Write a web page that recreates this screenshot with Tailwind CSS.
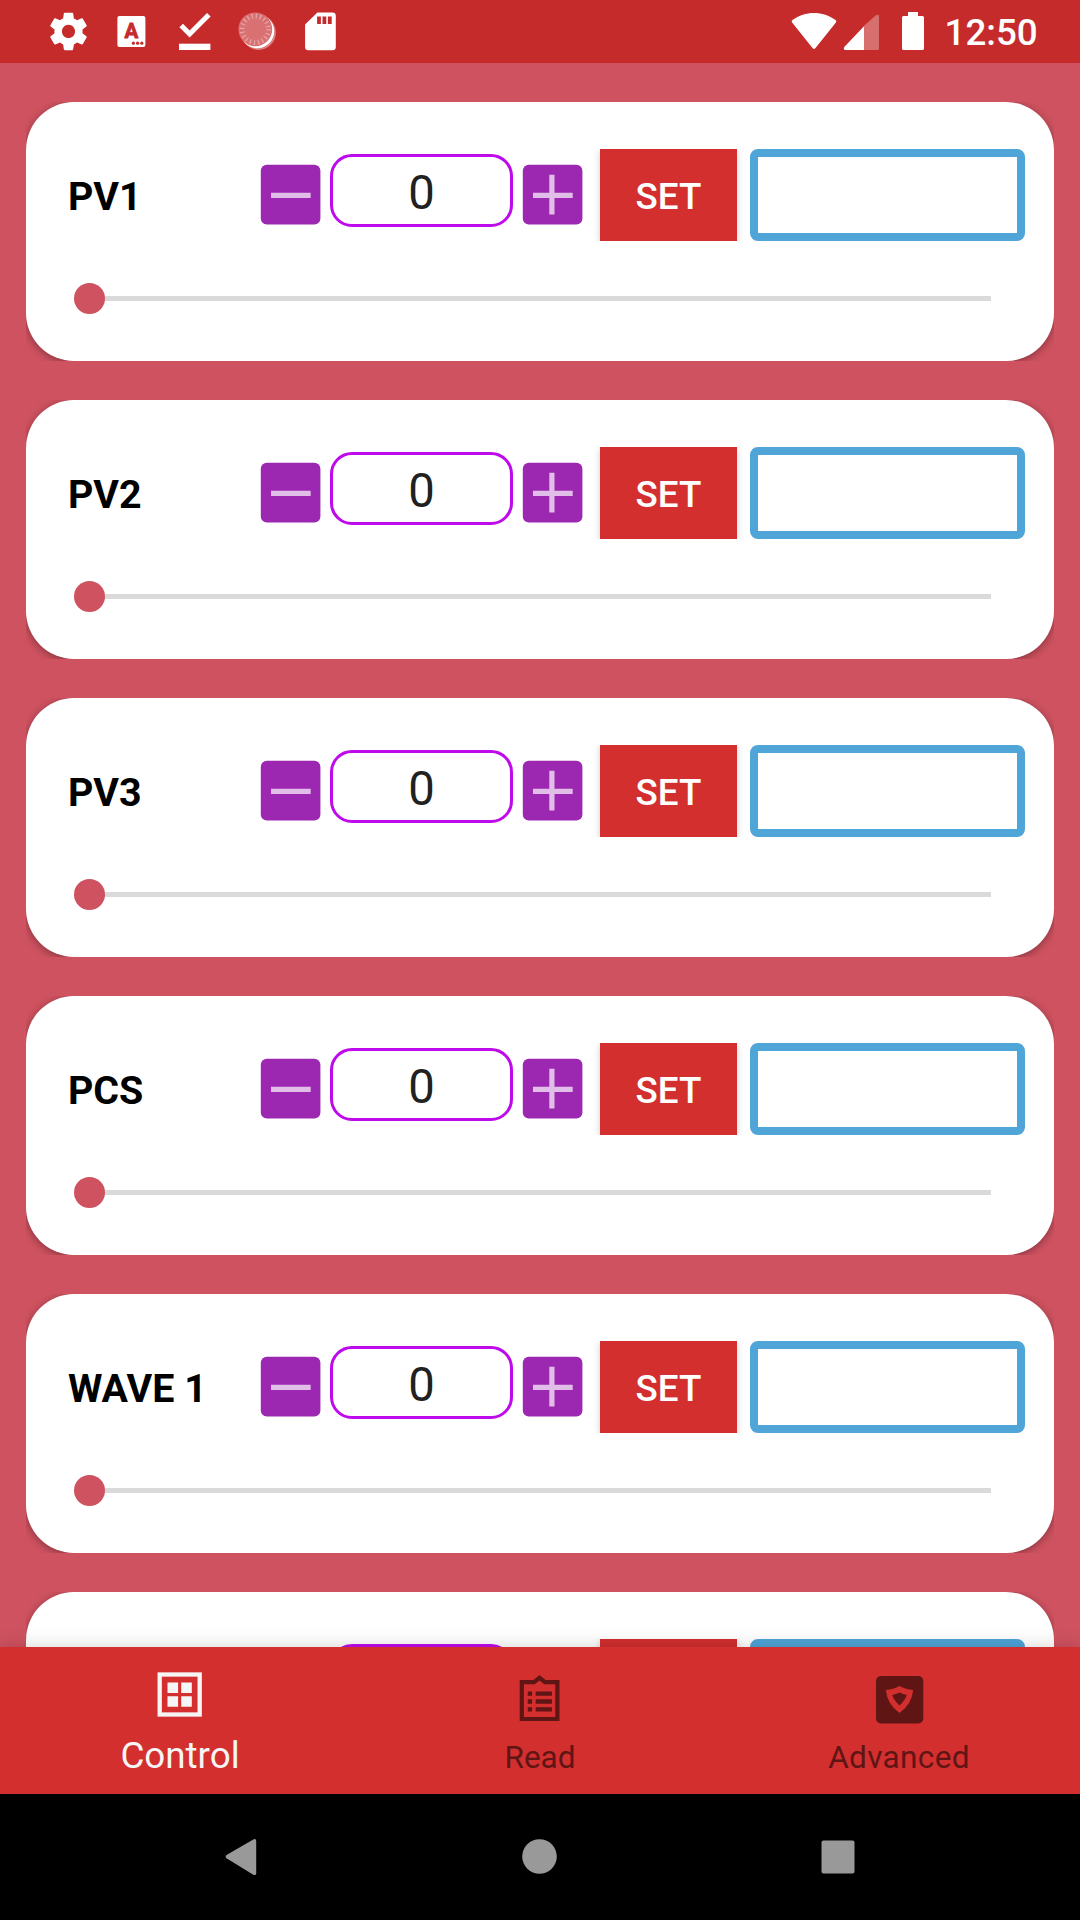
<!DOCTYPE html>
<html lang="en">
<head>
<meta charset="utf-8">
<title>Control</title>
<script src="https://cdn.jsdelivr.net/npm/@tailwindcss/browser@4"></script>
</head>
<body class="w-[1080px] h-[1920px] overflow-hidden flex flex-col bg-[#cf5260] font-['Roboto',sans-serif]">

<!-- Status bar -->
<header class="h-[63px] shrink-0 bg-[#c62b2b] flex items-start pl-[37px] text-white">
  <svg class="size-[63px]" viewBox="0 0 63 63" fill="currentColor"><path transform="translate(9 8.9) scale(1.875)" d="M19.43 12.98c.04-.32.07-.64.07-.98s-.03-.66-.07-.98l2.11-1.65c.19-.15.24-.42.12-.64l-2-3.46c-.12-.22-.39-.3-.61-.22l-2.49 1c-.52-.4-1.08-.73-1.69-.98l-.38-2.65C14.46 2.18 14.25 2 14 2h-4c-.25 0-.46.18-.49.42l-.38 2.65c-.61.25-1.17.59-1.69.98l-2.49-1c-.23-.09-.49 0-.61.22l-2 3.46c-.13.22-.07.49.12.64l2.11 1.65c-.04.32-.07.65-.07.98s.03.66.07.98l-2.11 1.65c-.19.15-.24.42-.12.64l2 3.46c.12.22.39.3.61.22l2.49-1c.52.4 1.08.73 1.69.98l.38 2.65c.03.24.24.42.49.42h4c.25 0 .46-.18.49-.42l.38-2.65c.61-.25 1.17-.59 1.69-.98l2.49 1c.23.09.49 0 .61-.22l2-3.46c.12-.22.07-.49-.12-.64l-2.11-1.65zM12 15.5c-1.93 0-3.5-1.57-3.5-3.5s1.57-3.5 3.5-3.5 3.5 1.57 3.5 3.5-1.57 3.5-3.5 3.5z"/></svg>
  <svg class="size-[63px]" viewBox="0 0 63 63" fill="currentColor"><rect x="17.4" y="16" width="28" height="31" rx="2"/><text x="31.3" y="38.3" text-anchor="middle" font-size="20.5" font-weight="700" fill="#c62b2b" stroke="#c62b2b" stroke-width=".8" stroke-linejoin="round">A</text><g fill="#c62b2b"><circle cx="33.4" cy="43.2" r="1.6"/><circle cx="37.6" cy="43.2" r="1.6"/><circle cx="41.8" cy="43.2" r="1.6"/></g></svg>
  <svg class="size-[63px]" viewBox="0 0 63 63" fill="currentColor"><path d="M18.2 25.6 26.6 34 45.8 14.7" fill="none" stroke="currentColor" stroke-width="5"/><rect x="16" y="43.7" width="31.4" height="6.3"/></svg>
  <svg class="size-[63px]" viewBox="0 0 63 63"><circle cx="32.6" cy="32.6" r="17.3" fill="#dc7f7f"/><circle cx="31.2" cy="31.3" r="17" fill="#fff"/><circle cx="29.3" cy="29.3" r="16.9" fill="#d97072"/><circle cx="29.3" cy="29.3" r="13.2" fill="none" stroke="#e6a3a3" stroke-width="5" stroke-dasharray="1.3 2.85"/></svg>
  <svg class="size-[63px]" viewBox="0 0 63 63" fill="currentColor"><path fill-rule="evenodd" d="M28.3 12.6H43.5a3.3 3.3 0 0 1 3.3 3.3V47a3.3 3.3 0 0 1-3.3 3.3H19.4a3.3 3.3 0 0 1-3.3-3.3V24.6zM28.1 16.4V24h3.8v-7.6zM33.5 16.4V24h3.8v-7.6zM38.9 16.4V24h3.8v-7.6z"/></svg>
  <span class="grow"></span>
  <svg class="w-[48px] h-[63px]" viewBox="0 0 48 63" fill="currentColor"><path d="M2.1 22.4Q1 21 2.5 20C15 10.6 33 10.6 45.500 20Q47 21 45.900 22.400L25.300 48.200Q24 49.700 22.700 48.200z"/></svg>
  <svg class="w-[48px] h-[63px]" viewBox="0 0 48 63" fill="currentColor"><path opacity=".32" d="M26 25.800 37.600 15.400Q41 13.500 41 16.500V48.500Q41 50 39.500 50H26z"/><path d="M26 26.300V50H6.800Q5 49.300 6.500 46.800z"/></svg>
  <svg class="w-[59px] h-[63px]" viewBox="0 0 59 63" fill="currentColor"><path d="M22 12h10v4h4.500Q38 16 38 17.500v31Q38 50 36.500 50h-19Q16 50 16 48.500v-31Q16 16 17.500 16H22z"/></svg>
  <span class="w-[135px] pt-[6px] -indent-[0.5px] text-[36.75px] leading-[54px] font-medium">12:50</span>
</header>

<!-- Channel list -->
<main id="channels" class="h-[1584px] shrink-0 overflow-hidden flex flex-col items-center gap-[39px] pt-[39px]"></main>

<!-- Tabs -->
<nav class="relative z-10 h-[147px] shrink-0 bg-[#d32f2f] grid grid-cols-3 shadow-[0_0_18px_rgba(0,0,0,0.18)] text-[#601515]">
  <a class="flex flex-col items-center pt-[16px] text-[#f5f5f5]">
    <svg class="size-[63px]" viewBox="0.5 0 63 63" fill="currentColor"><rect x="11.200" y="11.500" width="40" height="40" fill="none" stroke="currentColor" stroke-width="4.300"/><path d="M19 19.400h10.600V30H19zM32.700 19.400h10.600V30H32.700zM19 33.200h10.600v10.600H19zM32.700 33.200h10.600v10.600H32.700z"/></svg>
    <span class="mt-[8px] text-[36.75px] leading-[44px]">Control</span>
  </a>
  <a class="flex flex-col items-center pt-[21px]">
    <svg class="size-[63px]" viewBox="0.5 0 63 63" fill="currentColor"><path d="M13.300 14.200H25.500L31 9.800l5.500 4.400H48.900V51H13.300z" fill="none" stroke="currentColor" stroke-width="4.200"/><path d="M19.200 23.400h4.400v4.400h-4.400zM27.200 23.400h16.200v4.400H27.200zM19.200 31.300h4.400v4.400h-4.400zM27.200 31.300h16.200v4.400H27.200zM19.200 39.200h4.400v4.400h-4.400zM27.200 39.200h16.200v4.400H27.200z"/></svg>
    <span class="mt-[8px] text-[31.5px] leading-[38px]">Read</span>
  </a>
  <a class="flex flex-col items-center pt-[21px]">
    <svg class="size-[63px]" viewBox="0.5 0 63 63"><rect x="7.500" y="8" width="47.300" height="47.400" rx="5" fill="currentColor"/><path d="M31 18Q37 21.600 44.600 22Q43.500 36 31 45Q18.500 36 17.400 22Q25 21.600 31 18z" fill="#d32f2f"/><path d="M31 24.600Q34.500 26.600 38.300 27Q36.500 32.500 31 37.600Q25.500 32.500 23.700 27Q27.500 26.600 31 24.600z" fill="currentColor"/></svg>
    <span class="mt-[8px] mr-[2px] text-[31.5px] leading-[38px] tracking-[0.35px]">Advanced</span>
  </a>
</nav>

<!-- System navigation -->
<footer class="h-[126px] shrink-0 bg-black flex items-start justify-center gap-[236px] pt-[31px] text-[#999]">
  <svg class="size-[63px]" viewBox="0.5 0 63 63" fill="currentColor"><path d="M17 30Q15.300 31.700 17 33.300L43.800 49.700Q46.700 50.900 46.700 48.200V16.200Q46.700 13.300 43.800 14.400z"/></svg>
  <svg class="size-[63px]" viewBox="0.5 0 63 63" fill="currentColor"><circle cx="31" cy="31.500" r="17.300"/></svg>
  <svg class="size-[63px]" viewBox="0.5 0 63 63" fill="currentColor"><rect x="14" y="15.500" width="33" height="33" rx="2"/></svg>
</footer>

<script>
// The last card only peeks out above the tabs, so it is built without captions.
const card = ({ name = '', value = '', action = '' }) => `
<section class="w-[1028px] h-[259px] shrink-0 overflow-hidden">
  <div class="h-full bg-white rounded-[48px] shadow-[0_2px_8px_rgba(0,0,0,0.36)] pt-[47px] pl-[41px]">
    <div class="h-[92px] flex items-start">
      <h2 class="w-[194px] pt-[25px] pl-px text-[39.375px] leading-[46px] font-bold text-black whitespace-nowrap">${name}</h2>
      <svg class="mt-[16px] size-[59px] overflow-visible" viewBox="0 0 59 59"><rect x="-.2" y="-.2" width="59.6" height="59.6" rx="6" fill="#9c27b0"/><path d="M10 30.300h39.700" stroke="#e1bee7" stroke-width="5.200"/></svg>
      <div class="ml-[10px] mt-[5px] w-[183px] h-[73px] border-[3px] border-[#bf0aec] rounded-[22px] pt-[8px] text-center text-[47.25px] leading-[56px] text-[#212121]">${value}</div>
      <svg class="ml-[10px] mt-[16px] size-[59px] overflow-visible" viewBox="0 0 59 59"><rect x="-.2" y="-.2" width="59.6" height="59.6" rx="6" fill="#9c27b0"/><path d="M26.300 9.800h5.200v17.900H49.700v5.200H31.500V49.600H26.300V32.900H10v-5.200H26.300z" fill="#e1bee7"/></svg>
      <div class="ml-[18px] h-[92px] overflow-x-visible overflow-y-clip">
        <button class="block w-[137px] h-[92px] bg-[#d32f2f] shadow-[0_2px_7px_rgba(0,0,0,0.2)] pt-[3px] text-white text-[36.75px] leading-[44px] font-medium">${action}</button>
      </div>
      <div class="ml-[13px] w-[275px] h-[92px] border-8 border-[#4fa5d8] rounded-lg"></div>
    </div>
    <div class="mt-[42px] ml-[7px] w-[917px] h-[31px] flex items-center">
      <span class="size-[31px] rounded-full bg-[#cf5260] z-10"></span>
      <span class="grow h-[5px] bg-[#dadada] -ml-[4px]"></span>
    </div>
  </div>
</section>`;
const channels = ['PV1', 'PV2', 'PV3', 'PCS', 'WAVE 1'].map(name => ({ name, value: '0', action: 'SET' }));
document.getElementById('channels').innerHTML = [...channels, {}].map(card).join('');
</script>
</body>
</html>
